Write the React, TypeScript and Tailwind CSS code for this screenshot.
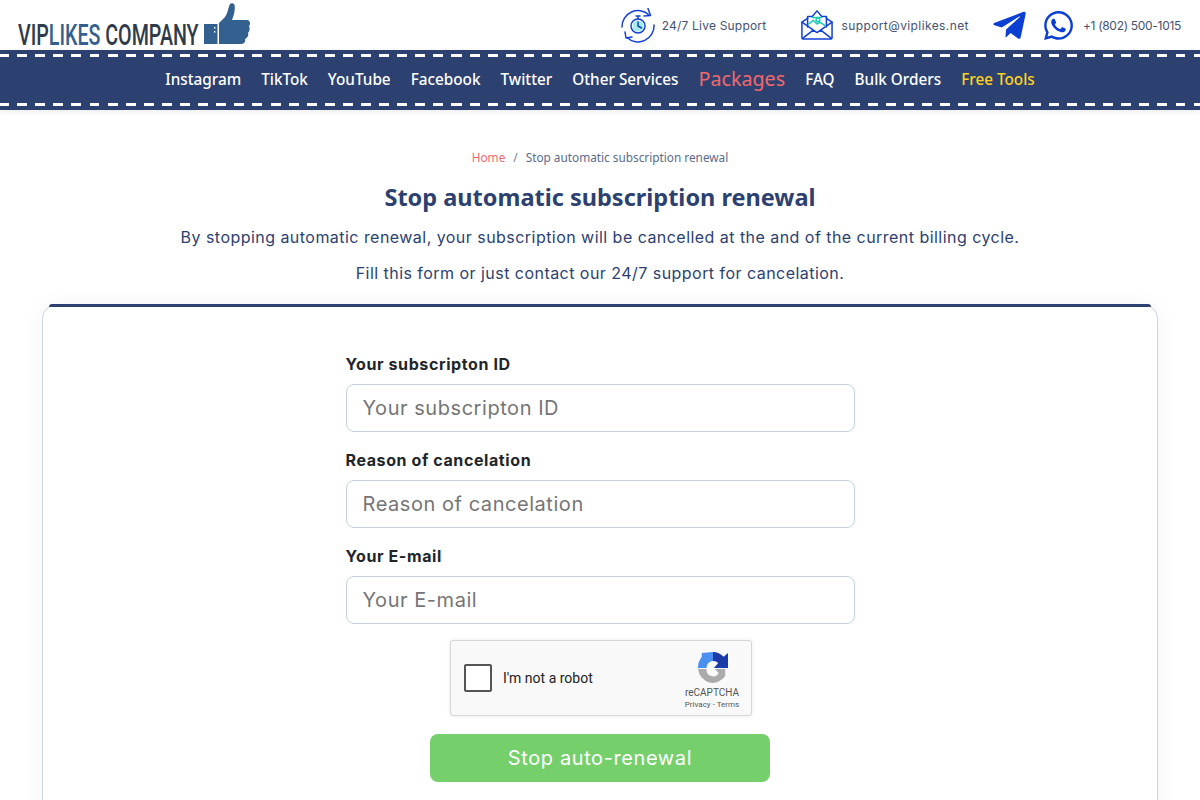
import React from "react";
import { FaTelegramPlane, FaWhatsapp } from "react-icons/fa";

const nav = ["Instagram", "TikTok", "YouTube", "Facebook", "Twitter", "Other Services"];
const nav2 = ["FAQ", "Bulk Orders"];

function Thumb() {
  return (
    <svg width="47" height="42" viewBox="0 0 47 42" className="block">
      <rect x="0" y="21" width="13.5" height="20" fill="#34608f" />
      <rect x="10" y="24" width="1.4" height="1.6" fill="#fff" />
      <rect x="10" y="28" width="1.4" height="1.6" fill="#fff" />
      <path fill="#34608f" d="M15 20 L21 14 C24 10 24 5 26 1 C27 -0.5 30 0 30.5 2 C31.5 6 30 12 28 17 L43 17 C46 17 47 21 45 23 C46 25 46 28 44 30 C45 33 43 35 41 36 C42 39 40 41 37 41 L15 41 Z" />
    </svg>
  );
}

function Dashes() {
  return <div className="h-[3px] w-full bg-[repeating-linear-gradient(90deg,#fff_0,#fff_9px,transparent_9px,transparent_17.1px,#fff_17.1px,#fff_18.1px)]" />;
}

function ClockIcon() {
  return (
    <svg width="34" height="36" viewBox="0 0 34 36" fill="none" stroke="#1440d6" strokeWidth="1.5" strokeLinecap="round" strokeLinejoin="round" className="mt-[2px]">
      <path d="M1 19 A16 16 0 0 1 28 7" />
      <path d="M27 0.5 L29.5 7.5 L23 8" />
      <path d="M33 17 A16 16 0 0 1 6 29.5" />
      <path d="M4 24 L5 30 L11 29" />
      <circle cx="17" cy="18" r="5.5" fill="#7fe6e0" stroke="none" fillOpacity="0.7" />
      <circle cx="17" cy="18" r="7" />
      <path d="M17 14 V18 L20.5 20 M15 8 H19 M17 8 V11" />
    </svg>
  );
}

function MailIcon() {
  return (
    <svg width="32" height="32" viewBox="0 0 34 32" fill="none" stroke="#1440d6" strokeWidth="1.6" strokeLinejoin="round" strokeLinecap="round">
      <path d="M1 13 V29 C1 30 2 31 3 31 H31 C32 31 33 30 33 29 V13 L27 9 M7 9 L1 13" />
      <path d="M7 18 V7 H12 L17 1 L22 7 H27 V18" />
      <path d="M1 13 L17 24 L33 13 M2 30 L13 21.5 M32 30 L21 21.5" />
      <path d="M8 15 L13 11 L17 15 L20 13 L26 17 M12 8 H22" stroke="#1ec9b5" />
      <circle cx="18" cy="10.5" r="2" stroke="#1ec9b5" />
    </svg>
  );
}

function Recaptcha() {
  return (
    <svg width="30" height="32" viewBox="0 0 32 32" preserveAspectRatio="none" className="block ml-[2px]">
      <path fill="#1c3aa9" d="M16 0 A16 16 0 0 1 27.3 4.7 L32 1 V16 H17 L21.5 11 A7 7 0 0 0 16 9 Z" />
      <path fill="#4a90f0" d="M4 1 L16 0 V9 A7 7 0 0 0 9 16 H0 A16 16 0 0 1 4 5 Z" />
      <path fill="#ababab" d="M0 17 H9 A7 7 0 0 0 22 21 L18 17 H29 V24 A16 16 0 0 1 0 17 Z" />
    </svg>
  );
}

function Field({ label }: { label: string }) {
  return (
    <div className="flex flex-col">
      <label className="h-[24px] mb-[8px] text-[16px] tracking-[0.6px] leading-[24px] font-bold text-[#212529]">{label}</label>
      <input
        placeholder={label}
        className="w-full h-[48px] rounded-[8px] border border-[#c6d0de] bg-white px-4 text-[20px] tracking-[0.55px] outline-none placeholder:text-[#757575]"
      />
    </div>
  );
}

export default function App() {
  const ruda = "font-['Noto_Sans',sans-serif]";
  return (
    <div className="h-screen overflow-hidden bg-white font-['Inter',sans-serif] text-[#2c4170]">
      <header className="flex h-[50px] items-center justify-between pl-[18px] pr-[19px]">
        <div className="flex items-end self-stretch pb-[5px]">
          <div className="w-[186px] h-[24px] overflow-visible">
            <div className="origin-top-left scale-x-[0.655] whitespace-nowrap font-['Roboto',sans-serif] font-medium text-[30px] leading-[28px] text-[#2f3b49]">
              VIP<span className="text-[#34608f]">LIKES</span> COMPANY
            </div>
          </div>
          <Thumb />
        </div>
        <div className="flex items-center text-[#44526f] text-[12px]">
          <ClockIcon />
          <span className="ml-[7px] mr-[35px] pt-[2px] tracking-[0.2px]">24/7 Live Support</span>
          <MailIcon />
          <span className="ml-[8px] mr-[22px] pt-[2px] tracking-[0.4px]">support@viplikes.net</span>
          <FaTelegramPlane className="text-[#0b3fd1] text-[37px] mr-[14px]" />
          <FaWhatsapp className="text-[#0b3fd1] text-[33px] mr-[8px]" />
          <span className="pt-[2px] tracking-[-0.3px]">+1 (802) 500-1015</span>
        </div>
      </header>

      <nav className={`h-[60px] bg-[#2c4170] flex flex-col justify-between pt-[4px] pb-[4px] shadow-[0_2px_6px_rgba(0,0,0,0.08)] ${ruda}`}>
        <Dashes />
        <div className="flex items-center justify-center gap-[20px] text-white text-[15.3px] font-medium -mt-[2px]">
          {nav.map((n) => <span key={n}>{n}</span>)}
          <span className="text-[#f0686c] text-[19.7px] font-normal">Packages</span>
          {nav2.map((n) => <span key={n}>{n}</span>)}
          <span className="text-[#ffd21f]">Free Tools</span>
        </div>
        <Dashes />
      </nav>

      <main className="flex flex-col items-center pt-[39px]">
        <div className={`flex items-center gap-[8px] h-[16px] text-[11.8px] leading-[16px] ${ruda}`}>
          <span className="text-[#f0686c]">Home</span>
          <span className="text-[#6c7a93]">/</span>
          <span className="text-[#5b6b88]">Stop automatic subscription renewal</span>
        </div>
        <h1 className={`mt-[16px] text-[23.5px] leading-[32px] font-bold text-[#2c4170] ${ruda}`}>Stop automatic subscription renewal</h1>
        <p className="mt-[12px] text-[16px] tracking-[0.46px] leading-[24px]">By stopping automatic renewal, your subscription will be cancelled at the and of the current billing cycle.</p>
        <p className="mt-[12px] text-[16px] tracking-[0.46px] leading-[24px]">Fill this form or just contact our 24/7 support for cancelation.</p>

        <section className="mt-[19px] w-[1116px] rounded-[15px] border border-[#ccd5e2] bg-white shadow-[0_0_20px_rgba(0,0,0,0.05)] pb-[40px] flex flex-col items-center">
          <div className="self-stretch -mt-px mx-[6px] h-[3px] rounded-t-[3px] bg-[#2c4170]" />
          <div className="mt-[45px] w-[509px] flex flex-col gap-[16px]">
            <Field label="Your subscripton ID" />
            <Field label="Reason of cancelation" />
            <Field label="Your E-mail" />
          </div>
          <div className="mt-[16px] ml-[2px] w-[302px] h-[76px] rounded-[3px] border border-[#d6d6d6] bg-[#f9f9f9] shadow-[0_0_4px_rgba(0,0,0,0.08)] flex items-center justify-between pl-[13px] pr-[10px] font-['Roboto',sans-serif]">
            <div className="flex items-center">
              <div className="w-[28px] h-[28px] rounded-[2px] border-2 border-[#555] bg-white" />
              <span className="ml-[11px] text-[14px] text-[#222]">I'm not a robot</span>
            </div>
            <div className="flex flex-col items-center w-[58px] pt-[6px]">
              <Recaptcha />
              <span className="mt-[3px] text-[10px] leading-[12px] text-[#555]">reCAPTCHA</span>
              <span className="mt-[1px] text-[8px] leading-[10px] text-[#555] whitespace-nowrap">Privacy - Terms</span>
            </div>
          </div>
          <button className="mt-[18px] w-[340px] h-[48px] rounded-[8px] bg-[#75cf6b] text-white text-[20px] tracking-[0.6px]">Stop auto-renewal</button>
        </section>
      </main>
    </div>
  );
}
